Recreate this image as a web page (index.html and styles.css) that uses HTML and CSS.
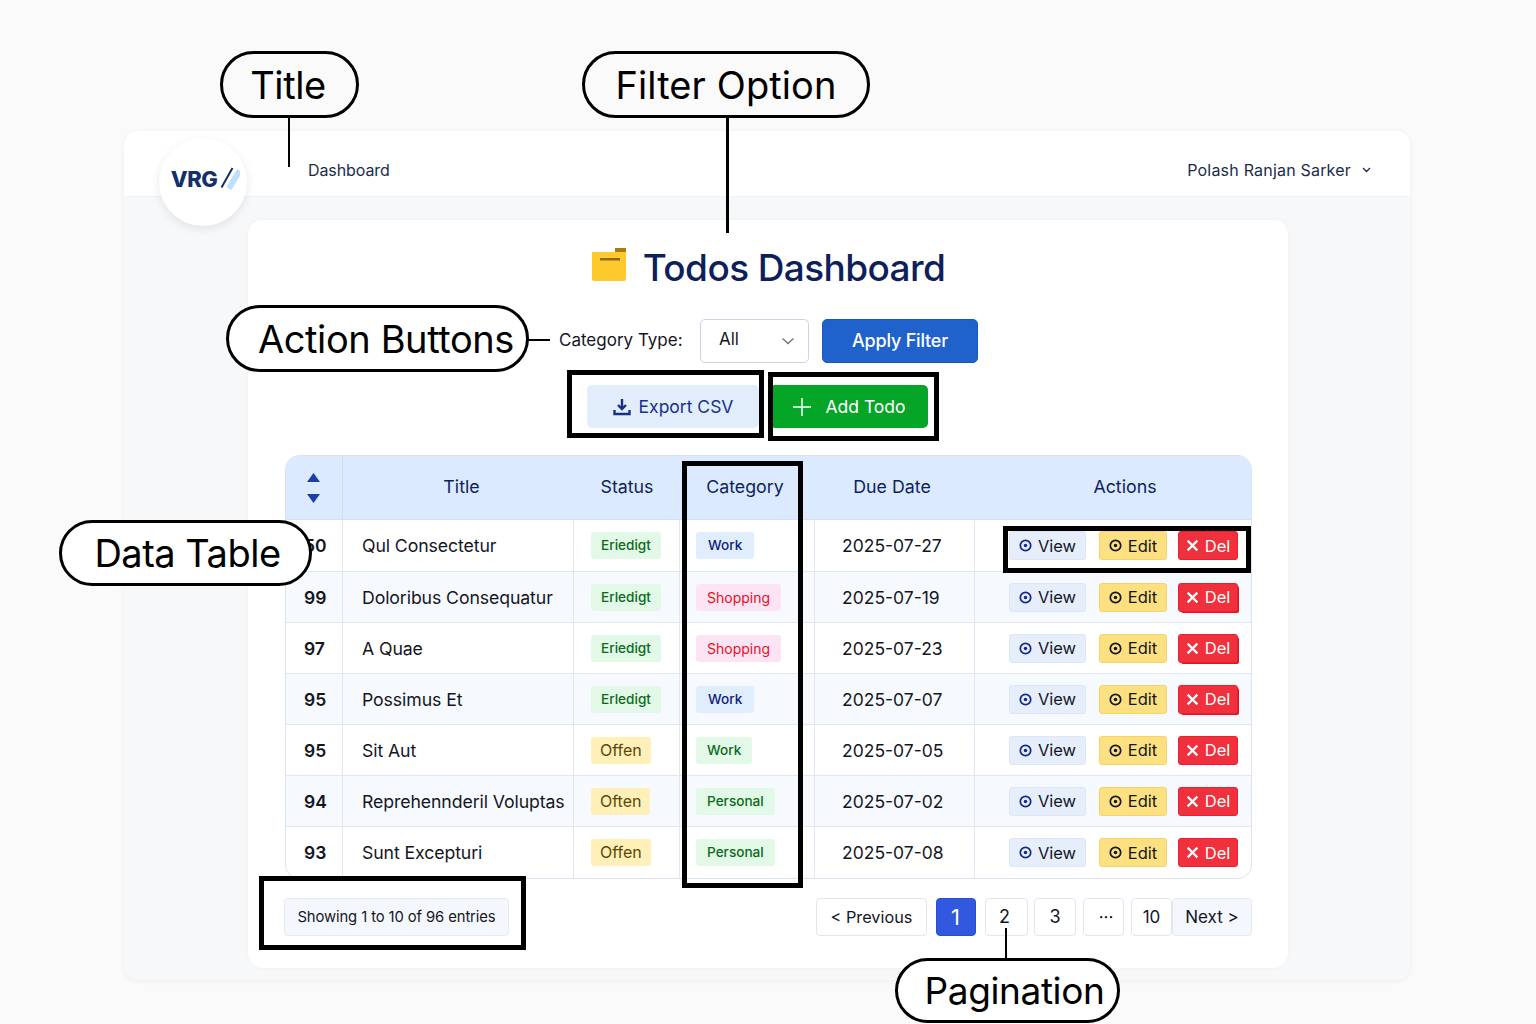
FILE: index.html
```html
<!DOCTYPE html>
<html lang="en">
<head>
  <meta charset="UTF-8" />
  <title>Todos Dashboard</title>
  <link rel="stylesheet" href="styles.css">
</head>
<body>
  <svg class="sprite" width="0" height="0">
    <symbol id="dot" viewBox="0 0 12 12">
      <circle cx="6" cy="6" r="4.8" fill="none" stroke="currentColor" stroke-width="1.6" />
      <circle cx="6" cy="6" r="1.6" fill="currentColor" />
    </symbol>
    <symbol id="cross" viewBox="0 0 12 12">
      <path d="M1.5 1.5l9 9M10.5 1.5l-9 9" fill="none" stroke="currentColor" stroke-width="2" />
    </symbol>
  </svg>

  <div class="shell">
    <div class="logo">
      <span class="logo-text">VRG</span>
      <svg class="logo-mark" width="20" height="24" viewBox="0 0 20 24">
        <path d="M9 21.5L19.5 3.5" stroke="#bfdffb" stroke-width="6" fill="none" />
        <path d="M1.5 20.5L12.5 1" stroke="#12306b" stroke-width="2" fill="none" />
      </svg>
    </div>

    <header class="topbar">
      <span class="crumb">Dashboard</span>
      <span class="user">
        Polash Ranjan Sarker
        <svg width="9" height="6" viewBox="0 0 9 6"><path d="M1 1l3.5 3.5L8 1" fill="none" stroke="#1c2b4a" stroke-width="1.3" /></svg>
      </span>
    </header>

    <main class="content">
      <section class="card">
        <h1 class="page-title">
          <svg width="34" height="34" viewBox="0 0 34 34">
            <path d="M23 0h11v5H23z" fill="#a87c10" />
            <path d="M1 4h32a1 1 0 0 1 1 1v26a2 2 0 0 1-2 2H2a2 2 0 0 1-2-2V5a1 1 0 0 1 1-1z" fill="#fdc92c" />
            <path d="M8 10h20v2.500H8z" fill="#8f6a0c" />
          </svg>
          Todos Dashboard
        </h1>

        <form class="filter-row">
          <label class="filter-label">Category Type:</label>
          <div class="select"><span class="select-value">All</span>
            <svg width="14" height="8" viewBox="0 0 14 8"><path d="M1.5 1.5L7 6.5l5.500-5" fill="none" stroke="#6b7280" stroke-width="1.3" /></svg>
          </div>
          <button class="btn-apply" type="button">Apply Filter</button>
        </form>

        <div class="action-row">
          <button class="btn-export" type="button">
            <svg width="18" height="18" viewBox="0 0 18 18">
              <path d="M9 1v9M5 7l4 4 4-4" fill="none" stroke="#16308a" stroke-width="2.4" />
              <path d="M1.5 12v4h15v-4" fill="none" stroke="#16308a" stroke-width="2.4" />
            </svg>
            Export CSV
          </button>
          <button class="btn-add" type="button">
            <svg width="20" height="20" viewBox="0 0 20 20"><path d="M10 1v18M1 10h18" stroke="#fff" stroke-width="1.5" fill="none" /></svg>
            Add Todo
          </button>
        </div>

        <div class="table-wrap">
          <table class="todos">
            <colgroup>
              <col class="col-id"><col class="col-title"><col class="col-status"><col class="col-cat"><col class="col-date"><col class="col-actions">
            </colgroup>
            <thead>
              <tr>
                <th class="sort-head">
                  <svg width="13" height="30" viewBox="0 0 13 30">
                    <path d="M6.5 0L13 9H0z" fill="#1d3f9e" />
                    <path d="M0 21h13l-6.500 9z" fill="#1d3f9e" />
                  </svg>
                </th>
                <th class="th-title">Title</th>
                <th>Status</th>
                <th class="th-cat">Category</th>
                <th class="th-date">Due Date</th>
                <th class="th-actions">Actions</th>
              </tr>
            </thead>
            <tbody>
              <tr>
                <td class="id">50</td><td class="title">Qul Consectetur</td>
                <td><span class="badge done">Eriedigt</span></td>
                <td class="cat"><span class="badge work">Work</span></td>
                <td class="date">2025-07-27</td>
                <td class="actions"><div class="btns">
                  <a class="btn view"><svg><use href="#dot" /></svg>View</a><a class="btn edit"><svg><use href="#dot" /></svg>Edit</a><a class="btn del"><svg><use href="#cross" /></svg>Del</a>
                </div></td>
              </tr>
              <tr>
                <td class="id">99</td><td class="title">Doloribus Consequatur</td>
                <td><span class="badge done">Erledigt</span></td>
                <td class="cat"><span class="badge shop">Shopping</span></td>
                <td class="date">2025-07-19</td>
                <td class="actions"><div class="btns">
                  <a class="btn view"><svg><use href="#dot" /></svg>View</a><a class="btn edit"><svg><use href="#dot" /></svg>Edit</a><a class="btn del smear"><svg><use href="#cross" /></svg>Del</a>
                </div></td>
              </tr>
              <tr>
                <td class="id">97</td><td class="title">A Quae</td>
                <td><span class="badge done">Eriedigt</span></td>
                <td class="cat"><span class="badge shop">Shopping</span></td>
                <td class="date">2025-07-23</td>
                <td class="actions"><div class="btns">
                  <a class="btn view"><svg><use href="#dot" /></svg>View</a><a class="btn edit"><svg><use href="#dot" /></svg>Edit</a><a class="btn del smear"><svg><use href="#cross" /></svg>Del</a>
                </div></td>
              </tr>
              <tr>
                <td class="id">95</td><td class="title">Possimus Et</td>
                <td><span class="badge done">Erledigt</span></td>
                <td class="cat"><span class="badge work">Work</span></td>
                <td class="date">2025-07-07</td>
                <td class="actions"><div class="btns">
                  <a class="btn view"><svg><use href="#dot" /></svg>View</a><a class="btn edit"><svg><use href="#dot" /></svg>Edit</a><a class="btn del smear"><svg><use href="#cross" /></svg>Del</a>
                </div></td>
              </tr>
              <tr>
                <td class="id">95</td><td class="title">Sit Aut</td>
                <td><span class="badge open">Offen</span></td>
                <td class="cat"><span class="badge personal">Work</span></td>
                <td class="date">2025-07-05</td>
                <td class="actions"><div class="btns">
                  <a class="btn view"><svg><use href="#dot" /></svg>View</a><a class="btn edit"><svg><use href="#dot" /></svg>Edit</a><a class="btn del"><svg><use href="#cross" /></svg>Del</a>
                </div></td>
              </tr>
              <tr>
                <td class="id">94</td><td class="title">Reprehennderil Voluptas</td>
                <td><span class="badge open">Often</span></td>
                <td class="cat"><span class="badge personal">Personal</span></td>
                <td class="date">2025-07-02</td>
                <td class="actions"><div class="btns">
                  <a class="btn view"><svg><use href="#dot" /></svg>View</a><a class="btn edit"><svg><use href="#dot" /></svg>Edit</a><a class="btn del"><svg><use href="#cross" /></svg>Del</a>
                </div></td>
              </tr>
              <tr>
                <td class="id">93</td><td class="title">Sunt Excepturi</td>
                <td><span class="badge open">Offen</span></td>
                <td class="cat"><span class="badge personal">Personal</span></td>
                <td class="date">2025-07-08</td>
                <td class="actions"><div class="btns">
                  <a class="btn view"><svg><use href="#dot" /></svg>View</a><a class="btn edit"><svg><use href="#dot" /></svg>Edit</a><a class="btn del"><svg><use href="#cross" /></svg>Del</a>
                </div></td>
              </tr>
            </tbody>
          </table>
        </div>

        <div class="table-foot">
          <div class="entries">Showing 1 to 10 of 96 entries</div>
          <nav class="pager">
            <a class="page prev">&lt; Previous</a>
            <a class="page num active">1</a>
            <a class="page num n2">2</a>
            <a class="page num n3">3</a>
            <a class="page num n4">&middot;&middot;&middot;</a>
            <a class="page num n5">10</a>
            <a class="page next">Next &gt;</a>
          </nav>
        </div>
      </section>
    </main>
  </div>

  <!-- callouts drawn over the page -->
  <div class="pill pill-title">Title</div>
  <div class="pill pill-filter">Filter Option</div>
  <div class="pill pill-actions">Action Buttons</div>
  <div class="pill pill-table">Data Table</div>
  <div class="pill pill-pages">Pagination</div>

  <i class="line line-title"></i>
  <i class="line line-filter"></i>
  <i class="line line-actions"></i>
  <i class="line line-pages"></i>

  <i class="mark mark-export"></i>
  <i class="mark mark-add"></i>
  <i class="mark mark-cat"></i>
  <i class="mark mark-row"></i>
  <i class="mark mark-entries"></i>
</body>
</html>
```

FILE: styles.css
```css
:root {
  --navy: #0f1f5c;
  --ink: #14161f;
  --line: #e0e6f2;
}

* {
  box-sizing: border-box;
}

html, body {
  height: 1024px;
  overflow: hidden;
}

body {
  margin: 0;
  padding: 131px 126px 0 124px;
  background: #fafafa;
  color: var(--ink);
  font-family: Inter, "Liberation Sans", sans-serif;
}

.sprite {
  position: absolute;
}

.shell {
  position: relative;
  height: 849px;
  background: #f7f8fa;
  border-radius: 14px;
  box-shadow: 0 1px 6px rgba(0,0,0,0.05);
  overflow: hidden;
}

.logo {
  position: absolute;
  left: 35px;
  top: 7px;
  width: 88px;
  height: 88px;
  z-index: 2;
  display: flex;
  align-items: center;
  justify-content: center;
  gap: 3px;
  padding: 0 0 7px 5px;
  background: #fff;
  border-radius: 50%;
  box-shadow: 0 3px 10px rgba(30,40,70,0.1);
}

.logo-text {
  color: #12306b;
  font-size: 22px;
  font-weight: 800;
  letter-spacing: -0.5px;
}

.topbar {
  height: 66px;
  display: flex;
  align-items: center;
  justify-content: space-between;
  padding: 20px 39px 8px 184px;
  background: #fff;
  border-bottom: 1px solid #f1f2f5;
  font-size: 16px;
  color: #1c2b4a;
}

.crumb {
  letter-spacing: -0.1px;
}

.user {
  display: flex;
  align-items: center;
  gap: 11px;
  letter-spacing: 0.2px;
}

.content {
  padding: 23px 122px 12px 124px;
}

.card {
  height: 748px;
  padding: 26px 36px 0 37px;
  background: #fff;
  border-radius: 14px;
  box-shadow: 0 0 4px rgba(0,0,0,0.04);
}

.page-title {
  display: flex;
  align-items: center;
  justify-content: center;
  gap: 17px;
  height: 42px;
  margin: 0;
  color: var(--navy);
  font-size: 37px;
  font-weight: 500;
  letter-spacing: -0.6px;
}

.page-title svg {
  margin-top: -4px;
}

.filter-row {
  display: flex;
  align-items: center;
  justify-content: center;
  height: 45px;
  margin-top: 30px;
}

.filter-label {
  width: 127px;
  margin-right: 14px;
  padding-bottom: 2px;
  font-size: 17px;
  white-space: nowrap;
}

.select {
  width: 109px;
  height: 44px;
  display: flex;
  align-items: center;
  justify-content: space-between;
  margin-right: 13px;
  padding: 0 13px 0 18px;
  border: 1px solid #ccd3e4;
  border-radius: 5px;
  font-size: 17px;
}

.select-value {
  padding-bottom: 3px;
}

.btn-apply {
  width: 156px;
  height: 44px;
  background: #1f62cc;
  border: 1px solid #1a57ba;
  border-radius: 5px;
  color: #fff;
  font: 500 18px Inter, "Liberation Sans", sans-serif;
  letter-spacing: -0.2px;
}

.action-row {
  display: flex;
  justify-content: center;
  gap: 11px;
  padding-right: 22px;
  margin-top: 22px;
}

.btn-export, .btn-add {
  height: 43px;
  display: flex;
  align-items: center;
  justify-content: center;
  border: 0;
  border-radius: 5px;
  font: 400 17.5px Inter, "Liberation Sans", sans-serif;
}

.btn-export {
  width: 172px;
  gap: 8px;
  background: #e2edfc;
  color: #16308a;
}

.btn-add {
  width: 158px;
  gap: 13px;
  background: #05a528;
  color: #fff;
}

.table-wrap {
  margin-top: 27px;
  border: 1px solid #dbe2f0;
  border-radius: 14px;
  overflow: hidden;
}

.todos {
  width: 100%;
  table-layout: fixed;
  border-collapse: separate;
  border-spacing: 0;
  font-size: 17.7px;
}

.col-id { width: 57px; }
.col-title { width: 231px; }
.col-status { width: 106px; }
.col-cat { width: 135px; }
.col-date { width: 160px; }

.todos th {
  height: 64px;
  padding: 0 0 2px;
  background: #dbeafe;
  border-bottom: 1px solid #d0e1f8;
  color: var(--navy);
  font-size: 17.8px;
  font-weight: 400;
}

.todos .sort-head {
  padding: 0;
  border-right: 1px solid #cddff7;
}

.sort-head svg {
  display: block;
  margin: 0 auto 0 21px;
}

.todos .th-title {
  padding-left: 6px;
}

.todos .th-cat {
  padding-right: 5px;
}

.todos .th-date {
  padding-right: 6px;
}

.todos .th-actions {
  padding-left: 24px;
}

.todos td {
  height: 51px;
  padding: 0 0 0 17px;
  border-bottom: 1px solid var(--line);
  border-right: 1px solid var(--line);
}

.todos tbody tr:first-child td {
  height: 52px;
}

.todos tr:nth-child(even) td {
  background: #f6faff;
}

.todos tr:last-child td {
  border-bottom: 0;
}

.todos td:last-child {
  border-right: 0;
}

.todos td.id {
  padding: 0 0 0 18px;
  font-weight: 600;
  font-size: 17.5px;
}

.todos td.title {
  padding-left: 19px;
  white-space: nowrap;
  letter-spacing: -0.1px;
}

.todos td.cat {
  padding-left: 16px;
}

.badge {
  display: inline-block;
  height: 27px;
  padding: 0 10px;
  line-height: 27px;
  border-radius: 3px;
  font-size: 13.6px;
  font-weight: 500;
}

.done {
  background: #e3f9e7;
  color: #0b6a1a;
}

.open {
  background: #fef0b8;
  color: #5a4708;
  font-size: 16px;
  font-weight: 400;
  padding: 0 9px;
}

.work {
  background: #e0edfd;
  color: #10207a;
  padding: 0 12px;
}

.shop {
  background: #fde4f4;
  color: #ee0c1e;
  padding: 0 11px;
  font-weight: 400;
  font-size: 14px;
}

.personal {
  background: #e3f9e7;
  color: #0b6a1a;
  padding: 0 11px;
}

.todos td.date {
  padding: 0 0 0 27px;
  font-size: 17.5px;
}

.todos td.actions {
  padding: 0 0 0 34px;
}

.btns {
  display: flex;
}

.btn {
  display: flex;
  align-items: center;
  justify-content: center;
  gap: 6px;
  height: 29px;
  border: 1px solid transparent;
  border-radius: 3px;
  font-size: 16.5px;
}

.btn svg {
  width: 13px;
  height: 13px;
}

.view {
  width: 77px;
  margin-right: 13px;
  background: #e6eefb;
  border-color: #dce6f8;
}

.view svg {
  color: #15288c;
}

.edit {
  width: 68px;
  margin-right: 11px;
  background: #fde07f;
  border-color: #f6d36a;
}

.del {
  width: 60px;
  background: #f1303e;
  border-color: #ea2030;
  color: #fff;
}

.smear {
  box-shadow: 2px 2px 0 -1px #e8101c;
}

.table-foot {
  display: flex;
  justify-content: space-between;
  margin-top: 19px;
}

.entries {
  width: 225px;
  height: 38px;
  margin-left: -1px;
  line-height: 36px;
  text-align: center;
  background: #f4f8fe;
  border: 1px solid #e4eaf4;
  border-radius: 4px;
  font-size: 14.8px;
  letter-spacing: -0.1px;
}

.pager {
  display: flex;
}

.page {
  height: 38px;
  line-height: 36px;
  text-align: center;
  background: #fff;
  border: 1px solid #e2e5ee;
  border-radius: 4px;
  font-size: 17px;
}

.prev {
  width: 111px;
  margin-right: 9px;
  font-size: 16.3px;
}

.active {
  width: 40px;
  margin-right: 9px;
  padding-right: 1px;
  background: #3358e0;
  border-color: #2a4fd6;
  color: #fff;
  font-size: 22px;
  font-weight: 400;
}

.n2 { width: 43px; margin-right: 6px; padding-right: 4px; font-size: 18px; }
.n3 { width: 42px; margin-right: 7px; font-size: 18px; }
.n4 { width: 41px; margin-right: 7px; padding-left: 5px; }
.n5 { width: 41px; }

.next {
  width: 80px;
  background: #f4f8fe;
  border-color: #e4eaf4;
}

/* callouts */

.pill {
  position: absolute;
  display: flex;
  align-items: center;
  justify-content: center;
  background: #fff;
  border: 3px solid #000;
  border-radius: 34px;
  color: #000;
  font-size: 38px;
  letter-spacing: -0.4px;
  white-space: nowrap;
}

.pill-title { left: 220px; top: 51px; width: 139px; height: 67px; padding-right: 3px; background: #fafafa; }
.pill-filter { left: 582px; top: 51px; width: 288px; height: 67px; letter-spacing: 0.1px; background: #fafafa; }
.pill-actions { left: 226px; top: 305px; width: 303px; height: 67px; padding-left: 17px; }
.pill-table { left: 59px; top: 520px; width: 253px; height: 66px; padding-left: 4px; letter-spacing: -0.5px; }
.pill-pages { left: 895px; top: 958px; width: 225px; height: 65px; padding-left: 14px; font-size: 37px; }

.line {
  position: absolute;
  background: #000;
}

.line-title { left: 288px; top: 117px; width: 2px; height: 50px; }
.line-filter { left: 726px; top: 117px; width: 3px; height: 116px; }
.line-actions { left: 528px; top: 339px; width: 22px; height: 2px; }
.line-pages { left: 1005px; top: 928px; width: 2px; height: 31px; }

.mark {
  position: absolute;
  border: 5px solid #000;
}

.mark-export { left: 567px; top: 370px; width: 197px; height: 68px; }
.mark-add { left: 768px; top: 372px; width: 171px; height: 69px; }
.mark-cat { left: 682px; top: 461px; width: 121px; height: 427px; }
.mark-row { left: 1003px; top: 526px; width: 248px; height: 47px; }
.mark-entries { left: 259px; top: 876px; width: 267px; height: 74px; }
```
